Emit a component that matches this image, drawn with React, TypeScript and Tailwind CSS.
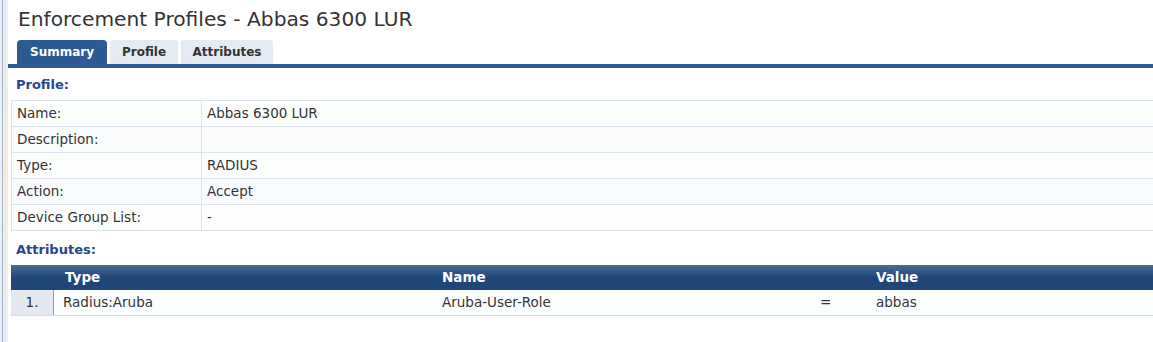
import React from "react";

const rows = [
  ["Name:", "Abbas 6300 LUR"],
  ["Description:", ""],
  ["Type:", "RADIUS"],
  ["Action:", "Accept"],
  ["Device Group List:", "-"],
];

export default function App() {
  return (
    <div
      className="w-[1153px] h-[342px] bg-white flex overflow-hidden text-[#333]"
      style={{ fontFamily: '"DejaVu Sans", Verdana, sans-serif' }}
    >
      <div className="w-[2px] bg-[#eef0f3]" />
      <div className="w-[1px] bg-[#9fb2cf]" />
      <div className="w-[5px] bg-gradient-to-b from-[#e9eef6] via-[#f3ecd6] to-[#e9eef6]" />
      <div className="flex-1 flex flex-col">
        <div className="h-[40px] pl-[10px] pt-[6px] text-[20.2px] leading-[26px] text-[#333]">
          Enforcement Profiles - Abbas 6300 LUR
        </div>
        <div className="flex items-end h-[24px] pl-[9px] gap-[3px] text-[12px] font-bold">
          <div className="h-[24px] w-[90px] rounded-t-[4px] bg-[#2c5a94] text-white flex items-center justify-center">
            Summary
          </div>
          <div className="h-[24px] w-[68px] rounded-t-[3px] bg-[#e4ebf3] text-[#333] flex items-center justify-center">
            Profile
          </div>
          <div className="h-[24px] w-[92px] rounded-t-[3px] bg-[#e4ebf3] text-[#333] flex items-center justify-center">
            Attributes
          </div>
        </div>
        <div className="h-[4px] bg-[#2c5a94]" />
        <div className="pl-[3px] flex flex-col">
          <div className="h-[32px] pl-[5px] pt-[2px] flex items-center text-[13px] font-bold text-[#27468c]">
            Profile:
          </div>
          <div className="border-t border-l border-[#dde3ec] flex flex-col text-[13.5px]">
            {rows.map(([k, v], i) => (
              <div
                key={k}
                className={`flex h-[26px] border-b border-[#dde3ec] ${i % 2 === 0 ? "bg-[#fdfffd]" : "bg-[#fafbfd]"}`}
              >
                <div className="w-[190px] pl-[5px] flex items-center border-r border-[#dde3ec]">{k}</div>
                <div className="flex-1 pl-[5px] flex items-center">{v}</div>
              </div>
            ))}
          </div>
          <div className="h-[34px] pl-[5px] pt-[3px] flex items-center text-[13px] font-bold text-[#27468c]">
            Attributes:
          </div>
          <div className="h-[25px] flex items-center text-[13.5px] font-bold text-white bg-gradient-to-b from-[#4a6c9b] via-[#1f4677] to-[#1f4677]">
            <div className="w-[54px]" />
            <div className="w-[377px]">Type</div>
            <div className="w-[434px]">Name</div>
            <div className="flex-1">Value</div>
          </div>
          <div className="h-[26px] flex items-center text-[13.5px] bg-[#fbfefe] border-b border-[#d7dee8]">
            <div className="w-[43px] h-full bg-[#e4e9f1] border-r border-[#8d98a8] flex items-center justify-center">
              1.
            </div>
            <div className="w-[388px] pl-[9px]">Radius:Aruba</div>
            <div className="w-[378px]">Aruba-User-Role</div>
            <div className="w-[56px]">=</div>
            <div className="flex-1">abbas</div>
          </div>
        </div>
      </div>
    </div>
  );
}
